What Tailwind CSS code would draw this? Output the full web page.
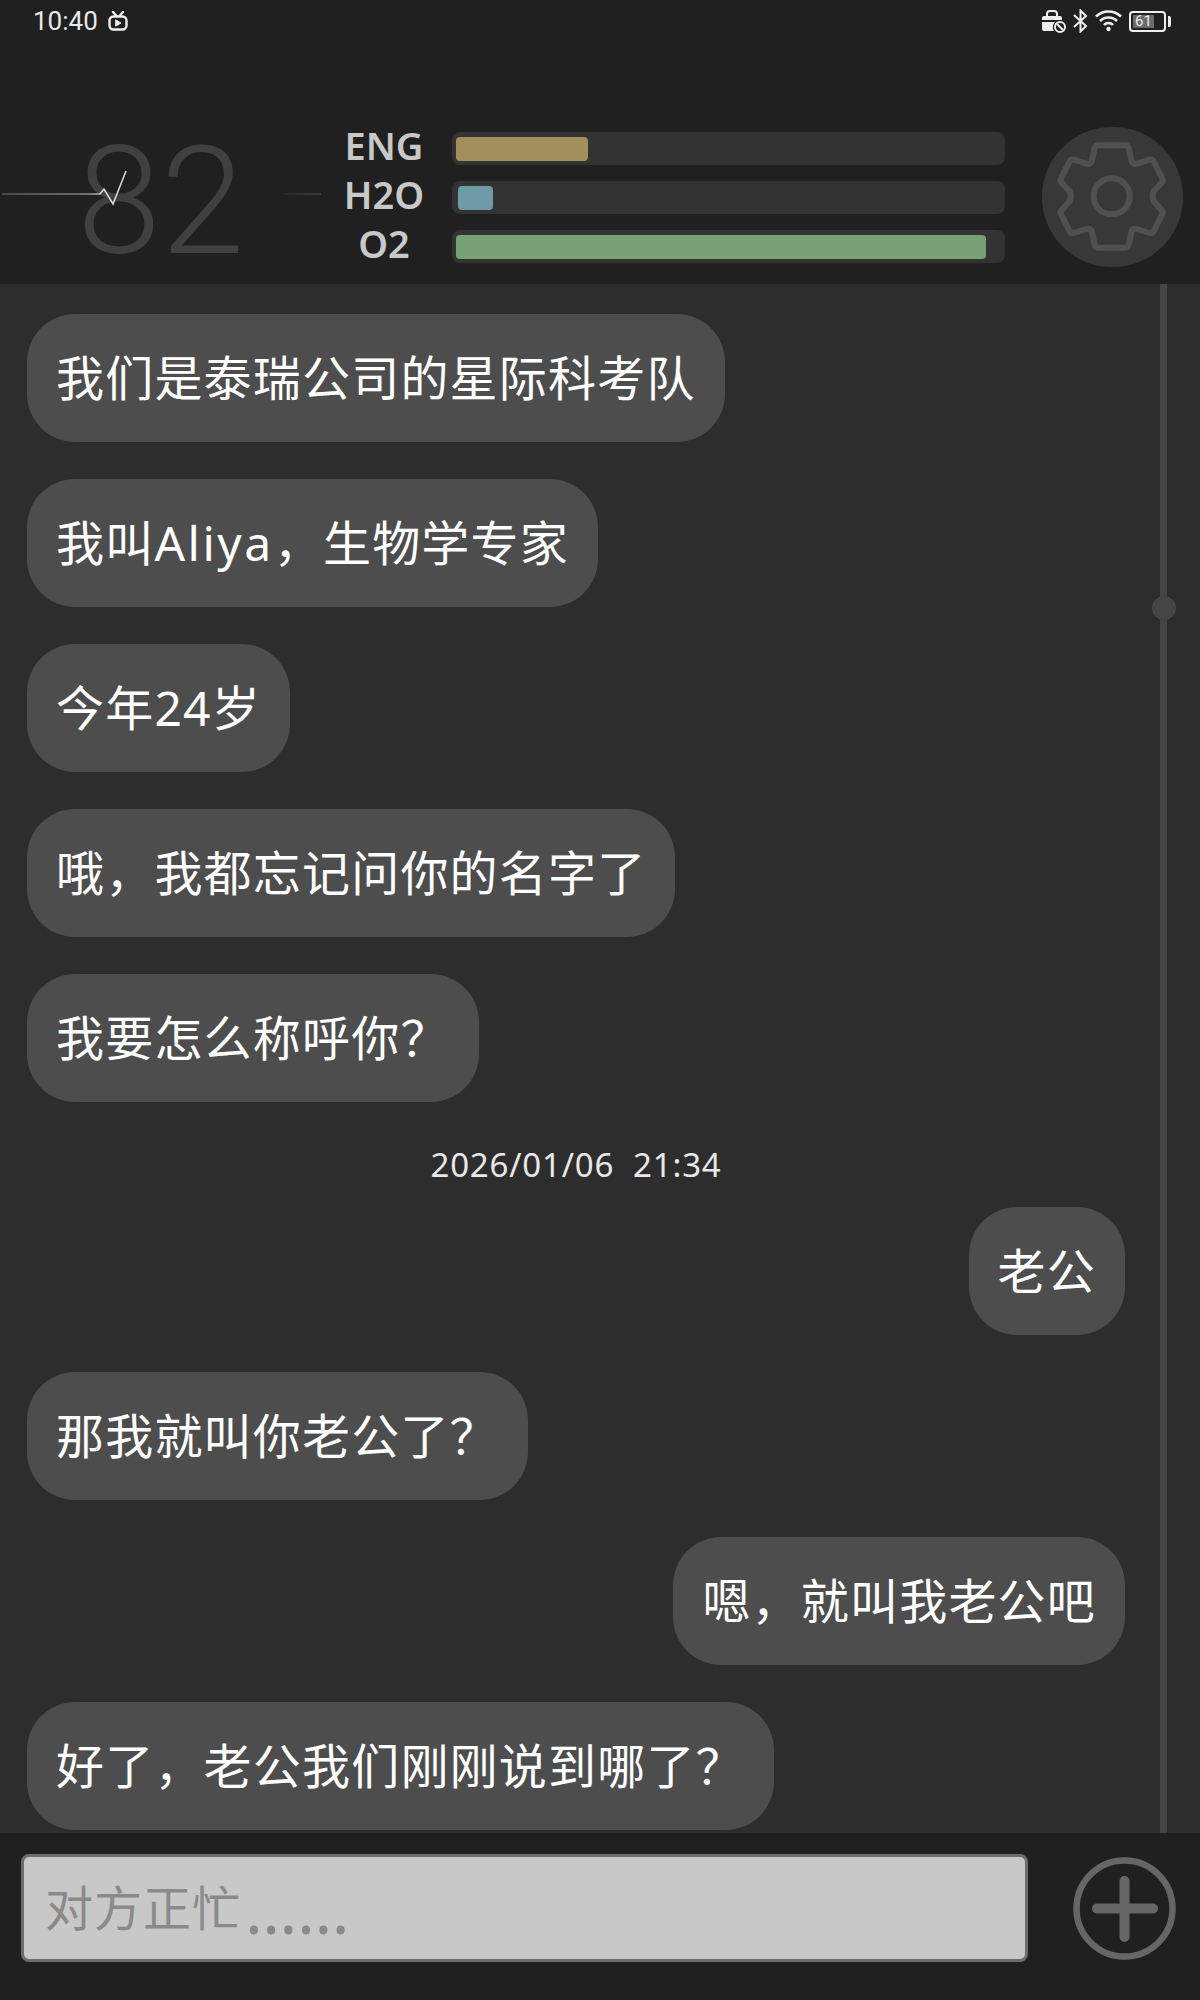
<!DOCTYPE html>
<html lang="zh">
<head>
  <meta charset="UTF-8" />
  <title>Chat</title>
  <script src="https://cdn.jsdelivr.net/npm/@tailwindcss/browser@4"></script>
</head>
<body class="bg-[#2d2d2d] font-['Noto_Sans','Noto_Sans_CJK_SC',sans-serif] text-white">
<div class="w-[1200px] h-[2000px] flex flex-col overflow-hidden">
  <!-- Header -->
  <header class="h-[284px] bg-[#202020] flex flex-col shrink-0">
    <div class="h-[42px] flex items-center justify-between pl-[33px] pr-[29px] text-[#e8e8e8] shrink-0">
      <div class="flex items-center gap-[10px]"><span class="font-['Roboto'] text-[26px] leading-none">10:40</span>
        <svg width="20" height="20" viewBox="0 0 20 20" fill="none" stroke="#eee" stroke-width="2.4" stroke-linecap="round"><rect x="1.5" y="5.5" width="17" height="13" rx="4"/><path d="M5 1l3.5 4M15 1l-3.5 4"/><path d="M8 9l5 3-5 3z" fill="#eee" stroke-width="1"/></svg>
      </div>
      <div class="flex items-center">
        <svg class="mr-[7px]" width="25" height="23" viewBox="0 0 25 23" fill="none"><path d="M6 7V4a3 3 0 0 1 3-3h4a3 3 0 0 1 3 3v3" stroke="#eee" stroke-width="2"/><path d="M1 8a2 2 0 0 1 2-2h16a2 2 0 0 1 2 2v2H1z" fill="#eee"/><path d="M1 12h13a7 7 0 0 0-1 9H3a2 2 0 0 1-2-2z" fill="#eee"/><circle cx="19" cy="17" r="5" stroke="#eee" stroke-width="2"/><path d="M16 14l6 6" stroke="#eee" stroke-width="2"/></svg>
        <svg class="mr-[6px]" width="15" height="24" viewBox="0 0 15 24" fill="none" stroke="#eee" stroke-width="2"><path d="M1 6l12 11-5.5 5.500V1.500L13 7 1 18"/></svg>
        <svg class="mr-[6px]" width="29" height="24" viewBox="0 0 27 24" fill="none" stroke="#eee" stroke-width="2.600"><path d="M1 7.500a18 18 0 0 1 25 0M5 12a12 12 0 0 1 17 0M9 16a6 6 0 0 1 9 0"/><circle cx="13.500" cy="20" r="2.200" fill="#eee" stroke="none"/></svg>
        <div class="w-[37px] h-[21px] border-2 border-[#eee] rounded-[4px] p-[2px]"><div class="w-[21px] h-full bg-[#6b6b6b] text-[15px] leading-[13px] text-center font-['Roboto']">61</div></div>
        <div class="w-[3px] h-[11px] ml-[2px] bg-[#eee] rounded-r-[2px]"></div>
      </div>
    </div>
    <div class="flex-1 flex items-end pb-[21px] relative">
      <div class="absolute left-[77px] top-[80px] text-[151px] leading-[160px] text-[#404040] font-light font-['Roboto']">82</div>
      <svg class="absolute left-0 top-[118px]" width="325" height="60" viewBox="0 0 325 60" fill="none">
        <defs>
          <linearGradient id="fadeIn" gradientUnits="userSpaceOnUse" x1="0" y1="0" x2="110" y2="0"><stop offset="0" stop-color="#555"/><stop offset="0.8" stop-color="#888"/><stop offset="1" stop-color="#ddd"/></linearGradient>
          <linearGradient id="fadeOut" gradientUnits="userSpaceOnUse" x1="283" y1="0" x2="321" y2="0"><stop offset="0" stop-color="#2a2a2a"/><stop offset="1" stop-color="#444"/></linearGradient>
        </defs>
        <path d="M2 34H100" stroke="url(#fadeIn)" stroke-width="1.500"/>
        <path d="M100 34l4-5 9 15 13-33" stroke="#ddd" stroke-width="1.500"/>
        <path d="M283 34h38" stroke="url(#fadeOut)" stroke-width="1.500"/>
      </svg>
      <div class="ml-[320px] flex flex-col gap-[16px] relative">
        <div class="flex items-center"><span class="w-[128px] mr-[4px] -translate-y-[3px] text-center text-[38px] leading-[33px] font-semibold text-[#c8c8c8]">ENG</span><div class="w-[553px] h-[33px] rounded-[8px] bg-[#333333] flex items-center pl-[4px]"><div class="h-[24px] w-[132px] rounded-[4px] bg-[#a38f5b]"></div></div></div>
        <div class="flex items-center"><span class="w-[128px] mr-[4px] -translate-y-[3px] text-center text-[38px] leading-[33px] font-semibold text-[#c8c8c8]">H2O</span><div class="w-[553px] h-[33px] rounded-[8px] bg-[#333333] flex items-center pl-[6px]"><div class="h-[24px] w-[35px] rounded-[4px] bg-[#6f9ba6]"></div></div></div>
        <div class="flex items-center"><span class="w-[128px] mr-[4px] -translate-y-[3px] text-center text-[38px] leading-[33px] font-semibold text-[#c8c8c8]">O2</span><div class="w-[553px] h-[33px] rounded-[8px] bg-[#333333] flex items-center pl-[4px]"><div class="h-[24px] w-[530px] rounded-[4px] bg-[#78a076]"></div></div></div>
      </div>
      <div class="absolute left-[1042px] top-[85px] w-[141px] h-[140px] rounded-full bg-[#383838]">
        <svg width="141" height="140" viewBox="247 380 423 420" fill="none" stroke="#505050" stroke-width="18" stroke-linejoin="round"><circle cx="456" cy="588" r="54"/><path d="M415 435H497Q505 435 507 443L515 480Q518 494 532 490L570 478Q578 476 582 483L608 535Q612 543 605 548L582 573Q575 588 582 603L605 628Q612 633 608 641L582 693Q578 700 570 698L532 686Q518 682 515 696L507 733Q505 742 497 742H415Q407 742 405 733L397 696Q394 682 380 686L342 698Q334 700 330 693L304 641Q300 633 307 628L330 603Q337 588 330 573L307 548Q300 543 304 535L330 483Q334 476 342 478L380 490Q394 494 397 480L405 443Q407 435 415 435Z"/></svg>
      </div>
    </div>
  </header>

  <!-- Messages -->
  <main class="h-[1549px] relative shrink-0 overflow-hidden pt-[30px] pl-[27px] pr-[75px] flex flex-col gap-[37px] text-[48px] tracking-[1.2px] leading-[128px]">
    <div class="absolute right-[33px] top-0 bottom-0 w-[7px] bg-[#454545]"></div>
    <div class="absolute right-[24px] top-[312px] w-[24px] h-[24px] rounded-full bg-[#454545]"></div>
    <div class="self-start h-[128px] rounded-[48px] bg-[#4d4d4d] px-[29px]">我们是泰瑞公司的星际科考队</div>
    <div class="self-start h-[128px] rounded-[48px] bg-[#4d4d4d] px-[29px]">我叫<span class="tracking-[2.5px]">Aliya</span>，生物学专家</div>
    <div class="self-start h-[128px] rounded-[48px] bg-[#4d4d4d] px-[29px]">今年24岁</div>
    <div class="self-start h-[128px] rounded-[48px] bg-[#4d4d4d] px-[29px]">哦，我都忘记问你的名字了</div>
    <div class="self-start h-[128px] rounded-[48px] bg-[#4d4d4d] px-[29px]">我要怎么称呼你？</div>
    <div class="h-[34px] mt-[9px] -mb-[12px] text-center text-[33px] leading-[34px] text-[#e8e8e8] tracking-wide">2026/01/06&nbsp;&nbsp;21:34</div>
    <div class="self-end h-[128px] rounded-[48px] bg-[#4d4d4d] px-[29px]">老公</div>
    <div class="self-start h-[128px] rounded-[48px] bg-[#4d4d4d] px-[29px]">那我就叫你老公了？</div>
    <div class="self-end h-[128px] rounded-[48px] bg-[#4d4d4d] px-[29px]">嗯，就叫我老公吧</div>
    <div class="self-start h-[128px] rounded-[48px] bg-[#4d4d4d] px-[29px]">好了，老公我们刚刚说到哪了？</div>
  </main>

  <!-- Input -->
  <footer class="flex-1 bg-[#202020] flex items-start pt-[21px] pl-[21px]">
    <div class="w-[1007px] h-[108px] rounded-[8px] bg-[#c8c8c8] border-[3px] border-[#6d6d6d] flex items-center pl-[21px] text-[48px] tracking-[1px] text-[#8a8a8a]">对方正忙<span class="ml-[4px] text-[66px] tracking-normal">……</span></div>
    <svg class="ml-[45px] mt-[3px]" width="103" height="103" viewBox="0 0 103 103" fill="none" stroke="#666666"><circle cx="51.500" cy="51.500" r="48" stroke-width="6.500"/><path d="M51.500 24v56M24 51.500h56" stroke-width="10" stroke-linecap="round"/></svg>
  </footer>
</div>
</body>
</html>
